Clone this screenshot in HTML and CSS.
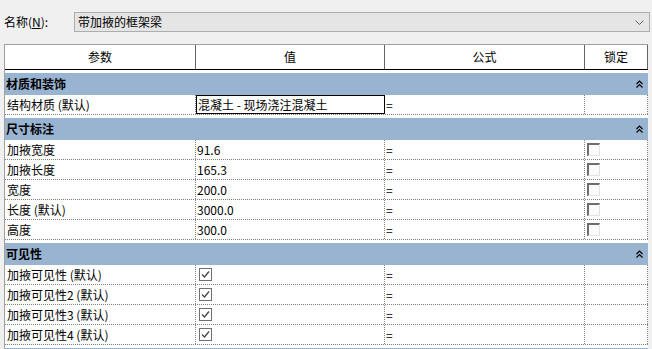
FILE: index.html
```html
<!DOCTYPE html>
<html lang="zh-CN">
  <head>
    <meta charset="UTF-8" />
    <title>类型属性</title>
    <link rel="stylesheet" href="styles.css">
  </head>
  <body>
    <div class="name-bar">
      <span class="name-label">名称(<u>N</u>):</span>
      <div class="combo">
        <span>带加掖的框架梁</span>
        <svg width="9" height="5" viewBox="0 0 9 5"><polyline points="0.5,0.5 4.5,4.5 8.5,0.5" fill="none" stroke="#606060" /></svg>
      </div>
    </div>

    <div class="table">
      <div class="row head">
        <div class="cell">参数</div>
        <div class="cell">值</div>
        <div class="cell">公式</div>
        <div class="cell">锁定</div>
      </div>

      <div class="group">
        <span>材质和装饰</span>
        <svg class="fold" width="7" height="8" viewBox="0 0 7 8"><polyline points="0.5,4 3.5,1 6.5,4" /><polyline points="0.5,7.5 3.5,4.5 6.5,7.5" /></svg>
      </div>
      <div class="row">
        <div class="cell">结构材质 (默认)</div>
        <div class="cell editing">混凝土 - 现场浇注混凝土</div>
        <div class="cell">=</div>
        <div class="cell"></div>
      </div>

      <div class="group">
        <span>尺寸标注</span>
        <svg class="fold" width="7" height="8" viewBox="0 0 7 8"><polyline points="0.5,4 3.5,1 6.5,4" /><polyline points="0.5,7.5 3.5,4.5 6.5,7.5" /></svg>
      </div>
      <div class="row">
        <div class="cell">加掖宽度</div>
        <div class="cell">91.6</div>
        <div class="cell">=</div>
        <div class="cell lock"><span class="box"></span></div>
      </div>
      <div class="row">
        <div class="cell">加掖长度</div>
        <div class="cell">165.3</div>
        <div class="cell">=</div>
        <div class="cell lock"><span class="box"></span></div>
      </div>
      <div class="row">
        <div class="cell">宽度</div>
        <div class="cell">200.0</div>
        <div class="cell">=</div>
        <div class="cell lock"><span class="box"></span></div>
      </div>
      <div class="row">
        <div class="cell">长度 (默认)</div>
        <div class="cell">3000.0</div>
        <div class="cell">=</div>
        <div class="cell lock"><span class="box"></span></div>
      </div>
      <div class="row">
        <div class="cell">高度</div>
        <div class="cell">300.0</div>
        <div class="cell">=</div>
        <div class="cell lock"><span class="box"></span></div>
      </div>

      <div class="group">
        <span>可见性</span>
        <svg class="fold" width="7" height="8" viewBox="0 0 7 8"><polyline points="0.5,4 3.5,1 6.5,4" /><polyline points="0.5,7.5 3.5,4.5 6.5,7.5" /></svg>
      </div>
      <div class="row">
        <div class="cell">加掖可见性 (默认)</div>
        <div class="cell"><svg class="check" width="13" height="13" viewBox="0 0 13 13"><rect x="0.5" y="0.5" width="12" height="12" /><polyline points="3,6.5 5.5,9 10,3.5" /></svg></div>
        <div class="cell">=</div>
        <div class="cell"></div>
      </div>
      <div class="row">
        <div class="cell">加掖可见性2 (默认)</div>
        <div class="cell"><svg class="check" width="13" height="13" viewBox="0 0 13 13"><rect x="0.5" y="0.5" width="12" height="12" /><polyline points="3,6.5 5.5,9 10,3.5" /></svg></div>
        <div class="cell">=</div>
        <div class="cell"></div>
      </div>
      <div class="row">
        <div class="cell">加掖可见性3 (默认)</div>
        <div class="cell"><svg class="check" width="13" height="13" viewBox="0 0 13 13"><rect x="0.5" y="0.5" width="12" height="12" /><polyline points="3,6.5 5.5,9 10,3.5" /></svg></div>
        <div class="cell">=</div>
        <div class="cell"></div>
      </div>
      <div class="row">
        <div class="cell">加掖可见性4 (默认)</div>
        <div class="cell"><svg class="check" width="13" height="13" viewBox="0 0 13 13"><rect x="0.5" y="0.5" width="12" height="12" /><polyline points="3,6.5 5.5,9 10,3.5" /></svg></div>
        <div class="cell">=</div>
        <div class="cell"></div>
      </div>

      <div class="group"></div>
    </div>
  </body>
</html>
```

FILE: styles.css
```css
body {
  margin: 0px;
  background-color: #f0f0f0;
  color: #000;
  font-family: "Noto Sans CJK SC", sans-serif;
  font-size: 12px;
  line-height: 1;
  overflow: hidden;
}

/* 名称下拉框 */
.name-bar {
  display: flex;
  align-items: center;
  height: 44px;
  padding: 12px 2px 12px 4px;
  box-sizing: border-box;
}
.name-label {
  width: 70px;
}
.combo {
  flex: 1;
  display: flex;
  align-items: center;
  justify-content: space-between;
  height: 20px;
  padding: 0 5px 0 3px;
  box-sizing: border-box;
  border: 1px solid #adadad;
  background-color: #e5e5e5;
}

/* 参数表 */
.table {
  width: 644px;
  margin-left: 4px;
  border-left: 1px solid #a0a0a0;
  border-top: 1px solid #a0a0a0;
  background-color: #fff;
  box-sizing: border-box;
}
.row {
  display: grid;
  grid-template-columns: 191px 189px 200px 63px;
  height: 20px;
  box-sizing: border-box;
  border-bottom: 1px dotted #808080;
}
.cell {
  display: flex;
  align-items: center;
  padding-left: 1px;
  border-right: 1px dotted #808080;
  white-space: nowrap;
  overflow: hidden;
}
.row .cell:first-child {
  padding-left: 2px;
}
.head {
  height: 25px;
  border-bottom: 1px solid #000;
}
.head .cell {
  justify-content: center;
  padding-left: 0px;
  border-right: 1px solid #646464;
}
.row.head .cell:first-child {
  padding-left: 0px;
}
.editing {
  outline: 1px solid #000;
  outline-offset: -1px;
  padding-left: 2px;
}

.group {
  display: flex;
  align-items: center;
  justify-content: space-between;
  height: 22px;
  margin-top: 3px;
  padding: 0 5px 0 1px;
  background-color: #99b4d1;
  font-weight: bold;
}
.fold polyline {
  fill: none;
  stroke: #000;
  stroke-width: 1.2;
}

.check {
  margin-left: 2px;
}
.check rect {
  fill: #fff;
  stroke: #707070;
}
.check polyline {
  fill: none;
  stroke: #404040;
  stroke-width: 1.2;
}

.lock {
  padding-left: 2px;
}
.lock .box {
  display: block;
  width: 10px;
  height: 10px;
  border-top: 2px solid #6d6d6d;
  border-left: 2px solid #6d6d6d;
  border-right: 1px solid #e3e3e3;
  border-bottom: 1px solid #e3e3e3;
  background-color: #fbfbfb;
}
```
